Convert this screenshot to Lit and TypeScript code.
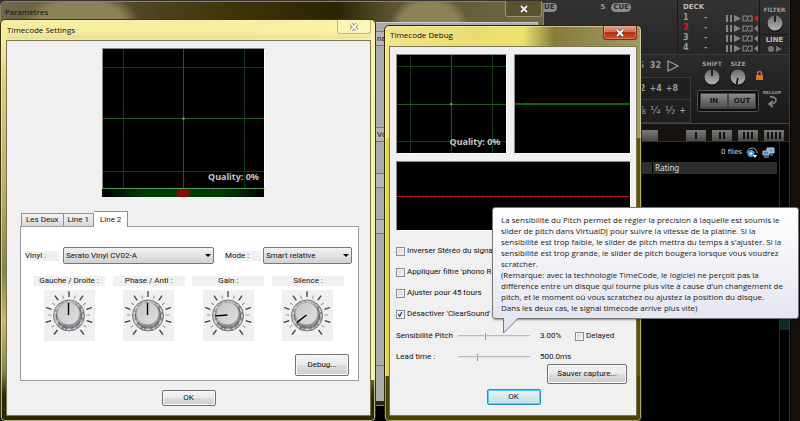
import { LitElement, html, css, svg } from "lit";
import { customElement, property } from "lit/decorators.js";

@customElement("signal-scope")
class SignalScope extends LitElement {
  @property({ type: Array }) columns: number[] = [];
  @property({ type: Array }) rows: number[] = [];
  @property() trace = "";
  @property() quality = "";

  static styles = css`
    :host { display: block; position: relative; background: #000; border: 1px solid #8c8c8c; border-right-color: #fff; border-bottom-color: #fff; box-sizing: border-box; }
    svg { display: block; width: 100%; height: 100%; }
    .quality { position: absolute; right: 5px; bottom: 5px; font: bold 9px/12px "Noto Sans", sans-serif; color: #c4c4c4; }
    .grid { stroke: #123a14; stroke-width: 1; }
    .axis { stroke: #1c5c20; stroke-width: 1; }
    .dot { fill: #2fe03a; }
    .green { stroke: #006c06; stroke-width: 2; }
    .red { stroke: #e01414; stroke-width: 1; stroke-dasharray: 3 1; }
    .under { stroke: #700808; stroke-width: 1; }
  `;

  render() {
    const mid = this.columns.length ? this.columns[1] : 0;
    const midRow = this.rows.length ? this.rows[1] : 0;
    return html`
      <svg aria-hidden="true">
        ${this.columns.map((x) => svg`<line class=${x === mid ? "axis" : "grid"} x1="${x}%" x2="${x}%" y1="0" y2="100%" shape-rendering="crispEdges"/>`)}
        ${this.rows.map((y) => svg`<line class=${y === midRow ? "axis" : "grid"} x1="0" x2="100%" y1="${y}%" y2="${y}%" shape-rendering="crispEdges"/>`)}
        ${mid ? svg`<svg x="${mid}%" y="${midRow}%" overflow="visible"><rect class="dot" x="-1" y="-1" width="2" height="2"/></svg>` : ""}
        ${this.trace === "green" ? svg`<line class="green" x1="0" x2="100%" y1="50%" y2="50%" shape-rendering="crispEdges"/>` : ""}
        ${this.trace === "red" ? svg`<line class="under" x1="0" x2="100%" y1="50%" y2="50%" shape-rendering="crispEdges"/><line class="red" x1="0" x2="100%" y1="50%" y2="50%" shape-rendering="crispEdges"/>` : ""}
      </svg>
      ${this.quality ? html`<span class="quality">${this.quality}</span>` : ""}
    `;
  }
}

@customElement("dial-knob")
class DialKnob extends LitElement {
  @property() label = "";
  @property({ type: Number }) angle = 0;

  static styles = css`
    :host { display: block; width: 72px; }
    .knob { display: flex; flex-direction: column; align-items: center; gap: 4px; position: relative; }
    .name { width: 100%; background: #f0f0f0; text-align: center; font: 8px/10px "Roboto", sans-serif; color: #111; }
    svg { display: block; width: 51px; height: 51px; background: #f0f0f0; }
    input { position: absolute; inset: 0; width: 100%; height: 100%; margin: 0; opacity: 0; }
  `;

  render() {
    const ticks = Array.from({ length: 17 }, (_, i) => i - 8);
    return html`
      <label class="knob">
        <span class="name">${this.label}</span>
        <svg viewBox="0 0 51 51" aria-hidden="true">
          <defs>
            <linearGradient id="rim" x1="0" y1="0" x2="1" y2="1">
              <stop offset="0" stop-color="#858588"/><stop offset="0.35" stop-color="#c2c2c5"/>
              <stop offset="0.6" stop-color="#808085"/><stop offset="1" stop-color="#aeaeb2"/>
            </linearGradient>
            <linearGradient id="cap" x1="0" y1="0" x2="1" y2="1">
              <stop offset="0" stop-color="#c6c6c9"/><stop offset="1" stop-color="#e0e0e3"/>
            </linearGradient>
          </defs>
          ${ticks.map((i) => {
            const major = i % 2 === 0;
            return svg`<line x1="25" x2="25" y1=${major ? 1.2 : 4.5} y2=${major ? 7 : 8}
              stroke=${major ? "#3a3a3a" : "#a8a8a8"} stroke-width="1.3" transform="rotate(${i * 17.7} 25 25.5)"/>`;
          })}
          <circle cx="25" cy="25.5" r="15.5" fill="url(#rim)" stroke="#77777b"/>
          <circle cx="25" cy="25.5" r="14" fill="none" stroke="#d4d4d8" stroke-width="1.6" stroke-dasharray="2 3 4 2 1 3"/>
          <circle cx="25" cy="25.5" r="12.5" fill="none" stroke="#68686d" stroke-width="1.2" stroke-dasharray="4 2 7 1"/>
          <circle cx="24.5" cy="23.5" r="11.3" fill="url(#cap)" stroke="#97979b" stroke-width="0.6"/>
          <line x1="24.5" y1="25" x2="24.5" y2="13" stroke="#000" stroke-width="1.4" transform="rotate(${this.angle} 24.5 25)"/>
        </svg>
        <input type="range" min="-142" max="142" .value=${String(this.angle)} />
      </label>
    `;
  }
}

@customElement("app-root")
class AppRoot extends LitElement {
  static styles = css`
    :host { display: block; position: relative; min-height: 100vh; overflow: hidden; background: #000; font: 8px/12px "Roboto", "Noto Sans", sans-serif; color: #111; }
    * { box-sizing: border-box; }
    button, select, input { font: inherit; color: inherit; margin: 0; }

    /* mixer behind the dialogs */
    .mixer { display: flex; flex-direction: column; min-height: 100vh; margin-right: 10px; background: #17140f; border-right: 1px solid #3a3a38; color: #9a9a9a; font: bold 7px/10px "DejaVu Sans", sans-serif; }
    .edge { position: absolute; inset: 0 0 0 auto; width: 9px; background: #15100c; }
    .upper { display: flex; justify-content: flex-end; height: 55px; background: linear-gradient(#333, #262626); border-bottom: 1px solid #3b3b3b; }
    .cues { display: flex; align-items: flex-start; gap: 6px; padding: 3px 46px 0 0; }
    .cue { padding: 0 2px; border-radius: 5px; background: #8c8c8c; color: #2b2b2b; line-height: 9px; }
    .cues > span { line-height: 9px; }
    .cues .first { margin-right: 38px; }
    .decks { width: 82px; padding: 2px 2px 0 5px; border-left: 1px solid #1a1a1a; }
    .decks h2 { margin: 0; font: inherit; line-height: 11px; color: #bbb; }
    .deck { display: grid; grid-template-columns: 16px 27px 8px 8px 12px 1fr; align-items: center; height: 10px; font-size: 8px; }
    .deck span { padding-left: 5px; }
    .deck.on b { color: #f21212; }
    .deck svg { display: block; }
    .line { width: 30px; border-left: 1px solid #191919; display: flex; flex-direction: column; align-items: center; padding-top: 6px; font-size: 6px; }
    .line .name { line-height: 8px; }
    .line .lower { width: 100%; margin-top: 2px; border-top: 1px solid #191919; color: #bbb; font-size: 7px; display: flex; flex-direction: column; align-items: center; }
    .loops { display: flex; justify-content: flex-end; height: 69px; background: linear-gradient(#2b2b2b, #191919); border-bottom: 1px solid #454545; }
    .beats { width: 68px; display: flex; flex-direction: column; font: bold 8px/12px "DejaVu Sans", sans-serif; }
    .beats div { flex: 1; display: flex; align-items: center; justify-content: flex-end; gap: 4px; padding-right: 12px; border-right: 1px solid #3b3b3b; border-bottom: 1px solid #3b3b3b; background: #202020; }
    .beats div:first-child { gap: 6px; border-right: 0; background: none; }
    .beats .parts { gap: 4px; padding-right: 4px; }
    .beats .parts span { font-size: 11px; font-weight: normal; }
    .loop { width: 98px; padding: 3px 4px 0 6px; display: grid; grid-template-columns: 62px 1fr; align-content: start; row-gap: 4px; }
    .dials { grid-column: 1 / 3; display: flex; padding: 2px 0 0 2px; align-items: center; font-size: 6px; }
    .dial { width: 26px; display: flex; flex-direction: column; align-items: center; line-height: 8px; }
    .lock { margin: 6px 0 0 4px; }
    .inout { display: flex; width: 62px; height: 22px; padding: 2px; border: 1px solid #555; border-radius: 3px; background: #0c0c0c; }
    .inout button { flex: 1; padding: 0; border: 1px solid #444; background: linear-gradient(#8c8c8c, #4c4c4c); color: #161616; font-size: 7px; }
    .reloop { display: flex; flex-direction: column; align-items: center; font-size: 4px; line-height: 5px; }
    .banks { display: flex; justify-content: flex-end; align-items: flex-end; gap: 6px; height: 17px; padding-right: 5px; }
    .bank { display: flex; justify-content: center; gap: 2px; width: 20px; height: 11px; padding: 2px 0; border: 0; background: linear-gradient(#7a7a7a, #4a4a4a); }
    .bank.wide { width: 26px; margin-right: 22px; }
    .bank i { width: 2px; background: #111; }
    .browser { flex: 1; display: grid; grid-template-columns: 1fr 10px; background: #000; border-top: 1px solid #303030; color: #ddd; }
    .rail { border-left: 1px solid #2c2c2c; padding-top: 177px; }
    .rail i { display: block; height: 11px; background: #0e2b2c; }
    .status { display: flex; justify-content: flex-end; align-items: center; gap: 4px; height: 20px; padding-right: 4px; font: 7px/12px "DejaVu Sans", sans-serif; }
    .cols { display: flex; justify-content: flex-end; gap: 1px; padding-right: 2px; }
    .cols span { width: 124px; height: 12px; padding-left: 2px; background: #2e2e2e; font: 8px/12px "Noto Sans", sans-serif; }

    /* glass windows */
    .window { position: absolute; border-radius: 5px; border: 1px solid #4a4526; }
    .bar { display: flex; justify-content: space-between; align-items: flex-start; }
    .bar h1 { margin: 0; font: 8px/12px "Open Sans", sans-serif; color: #0b0b0b; }
    .close { display: flex; align-items: center; justify-content: center; padding: 0; height: 14px; width: 34px; border: 1px solid #7d7750; border-top: 0; border-radius: 0 0 3px 3px; background: #fff3; }
    .close svg { display: block; }

    .params { left: 0; top: 1px; width: 68%; border-color: #8a8462; background: radial-gradient(ellipse 60px 34px at 80px 22px, #8a8258 70%, #0000 100%), radial-gradient(ellipse 40px 34px at 428px 26px, #8b8355 75%, #0000 100%), linear-gradient(90deg, #6f6a4c, #4d4420 28%, #3e3609 42%, #2b2404 62%, #5c5430 72%, #6f6944); }
    .params .bar { height: 20px; padding: 4px 1px 0 4px; }
    .params .close { background: #5a532f; margin-top: -5px; height: 16px; width: 37px; border-color: #9b9570; }
    .under { margin: 0 5px; padding-top: 8px; background: #aaa; border: 1px solid #ccc; border-bottom: 4px solid #2c2602; }
    .under p { margin: 0; height: 15px; padding-left: 370px; border: solid #777; border-width: 1px 0; background: #b6b6b6; line-height: 13px; overflow: hidden; }
    .under .group { margin-top: 81px; }
    .under .row { margin-top: 31px; }
    .under .last { margin: 131px 0 0; height: 36px; background: none; border-bottom: 0; }

    .settings { left: 0; top: 19px; width: 47%; padding: 0 4px 5px 5px; border: 1px solid #3a360f; background: linear-gradient(90deg, #0000 60%, #faf4a8 100%) 0 0 / 100% 360px no-repeat, linear-gradient(#f5eda0 20px, #dcd07c 60px, #b5aa62 180px, #8a814a 250px, #c4b86e 300px, #8f864d 350px, #2d2803 375px); box-shadow: inset 0 0 0 1px #f8f3b8aa; }
    .settings .bar { height: 20px; padding: 4px 0 0 1px; background: linear-gradient(#0000 12px, #cfc68955 18px, #0000); }
    .settings .close { margin-top: -4px; border-color: #c2ba7f; }
    .client { background: #f0f0f0; border: 1px solid #77754f; }
    .settings .client { display: flex; flex-direction: column; align-items: center; padding: 7px 11px 9px 13px; }
    .view { margin-right: 12px; }
    .settings signal-scope { width: 163px; height: 141px; border-bottom-color: #5c9660; }
    .balance { width: 162px; height: 8px; background: radial-gradient(ellipse 9px 16px, #8c0a00 30%, #0000 100%), linear-gradient(90deg, #000, #003a00 25%, #003a00 75%, #000); }
    .tabs { align-self: stretch; display: flex; align-items: flex-end; margin-top: 14px; padding-left: 1px; position: relative; }
    .tab { height: 13px; padding: 0 4px; border: 1px solid #8e8f94; border-bottom: 0; background: linear-gradient(#f4f4f4, #d8d8d8); line-height: 12px; white-space: nowrap; }
    .tab + .tab { border-left: 0; }
    .tab.on { height: 16px; margin-bottom: -1px; padding: 0 6px; background: #fff; }
    .page { align-self: stretch; padding: 20px 6px 4px 4px; border: 1px solid #9a9ba5; background: #fff; }
    .fields { display: flex; align-items: center; gap: 4px; height: 17px; }
    .fields label { width: 34px; background: #f0f0f0; line-height: 10px; }
    .fields .mode { margin-left: 7px; width: 36px; }
    select { appearance: none; height: 17px; padding: 0 2px; border: 1px solid #777; border-radius: 2px; background: linear-gradient(#f2f2f2, #d2d2d2); }
    .pick { position: relative; display: flex; flex: 151; }
    .pick.small { flex: 89; margin-left: -2px; }
    .pick select { width: 100%; }
    .pick svg { position: absolute; right: 3px; top: 7px; pointer-events: none; }
    .knobs { display: flex; justify-content: space-between; margin-top: 12px; padding: 0 8px; }
    .actions { display: flex; justify-content: flex-end; margin-top: 13px; padding-right: 3px; }
    .push { padding: 0; border: 1px solid #707070; border-radius: 2px; background: linear-gradient(#f3f3f3, #ebebeb 50%, #dcdcdc 50%, #cfcfcf); box-shadow: inset 0 0 0 1px #fafafa; }
    .debug { width: 54px; height: 22px; }
    .ok { width: 54px; height: 16px; }
    .settings .ok { margin: 9px 2px 0 0; }

    .monitor { left: 48%; top: 25px; width: 32.25%; padding: 0 4px 5px; border-color: #2b270c; background: linear-gradient(90deg, #f3e58a, #eadc72 35%, #efe16e 54%, #877c3c 66%, #a09a66) 0 0 / 100% 112px no-repeat, linear-gradient(90deg, #e5d148 50%, #5d5208 50%) 0 0 / 100% 350px no-repeat, linear-gradient(#5a5010, #4b4206); box-shadow: inset 0 0 0 1px #fbf5c088; }
    .monitor .bar { height: 20px; padding: 3px 0 0 1px; }
    .monitor .close { margin-top: -3px; border-color: #7b2a1c; background: linear-gradient(#e0a08c, #cf6f54 45%, #b52f12 50%, #d4502e); box-shadow: inset 0 0 0 1px #f0b8a066; }
    .monitor .client { padding: 7px 5px 10px 6px; }
    .scopes { display: grid; grid-template-columns: 111fr 118fr; gap: 7px; }
    .scopes signal-scope { height: 100px; }
    .scopes .wide { grid-column: 1 / 3; height: 70px; }
    .checks { margin-top: 14px; display: grid; grid-auto-rows: 12px; row-gap: 9px; }
    .check { display: flex; align-items: center; gap: 2px; white-space: nowrap; }
    .check input { appearance: none; flex: none; width: 9px; height: 9px; border: 1px solid #8b8b8b; background: linear-gradient(135deg, #cfd2d6, #f6f6f6); box-shadow: inset 0 0 0 1px #f4f4f4; }
    .check input:checked { background: url("data:image/svg+xml,%3Csvg xmlns='http://www.w3.org/2000/svg' viewBox='0 0 9 9'%3E%3Cpath d='M1.5 4 3.5 6.5 6.5 .5' fill='none' stroke='%23233f8c' stroke-width='1.5'/%3E%3C/svg%3E") #e8eaee; }
    .sliders { display: grid; grid-template-columns: 62px 72px 45px 1fr; row-gap: 9px; margin-top: 10px; align-items: center; white-space: nowrap; }
    .sliders output { padding-left: 10px; }
    input[type="range"] { appearance: none; width: 100%; height: 7px; background: linear-gradient(#bbb, #bbb) 0 2px / 100% 1px no-repeat, linear-gradient(#e2e2e2, #e2e2e2) 0 3px / 100% 1px no-repeat; }
    input[type="range"]::-webkit-slider-thumb { appearance: none; width: 2px; height: 7px; background: #f0f0f0; border-right: 1px solid #999; }
    .capture { width: 80px; height: 20px; }
    .foot { display: flex; flex-direction: column; align-items: center; gap: 5px; padding-top: 1px; }
    .foot .capture { align-self: flex-end; margin-right: 4px; }
    .foot .ok { border-color: #2a8fb5; background: linear-gradient(#eef6fa, #d6e8f1 50%, #bfdceb); box-shadow: inset 0 0 0 1px #4fd0f4; }

    .tip { position: absolute; left: 61%; right: 1px; top: 207px; margin-left: 4px; padding: 6px 8px 5px; border: 1px solid #767676; border-radius: 3px; background: linear-gradient(#fff, #e4e5f0); box-shadow: 1px 1px 2px #0006; font: 8px/11px "Open Sans", sans-serif; color: #202020; }
    .tip p { margin: 0; white-space: pre; }
    .tip svg { position: absolute; left: 10px; top: 100%; }
  `;

  private cross(color: string) {
    return html`<svg width="10" height="8" viewBox="0 0 10 8" aria-hidden="true"><path d="M2 1 8 7M8 1 2 7" stroke="#444a" stroke-width="3.4"/><path d="M2 1 8 7M8 1 2 7" stroke=${color} stroke-width="1.8"/></svg>`;
  }

  private arrow() {
    return html`<svg width="6" height="3" viewBox="0 0 6 3" aria-hidden="true"><path d="M0 0H6L3 3Z" fill="#000"/></svg>`;
  }

  private dial(angle: number) {
    return html`<svg width="18" height="18" viewBox="0 0 18 18" aria-hidden="true">
      <defs><linearGradient id="g" x2="0" y2="1"><stop stop-color="#6a6a6a"/><stop offset="1" stop-color="#b4b4b4"/></linearGradient></defs>
      <circle cx="9" cy="10" r="8" fill="#111"/><circle cx="9" cy="9" r="7.5" fill="url(#g)"/>
      <path d="M9 8V1.5" stroke="#0a0a0a" stroke-width="1.6" transform="rotate(${angle} 9 9)"/></svg>`;
  }

  private deck(n: number) {
    return html`<div class="deck ${n === 2 ? "on" : ""}">
      <b>${n}</b><span>-</span>
      <svg width="7" height="7" viewBox="0 0 7 7"><path d="M1 0V7M5 0V7" stroke="#858585" stroke-width="2"/></svg>
      <svg width="7" height="7" viewBox="0 0 7 7"><path d="M0 0 7 3.5 0 7Z" fill="#858585"/></svg>
      <svg width="11" height="7" viewBox="0 0 11 7"><path d="M4.5 2V1H1V6H4.5L6.5 1H10V6H6.5V5" fill="none" stroke="#858585" stroke-width="1.2"/></svg>
      <svg width="4" height="7" viewBox="0 0 4 7"><path d="M4 0V7L0 3.5Z" fill=${n === 1 ? "#f21212" : "#858585"}/></svg>
    </div>`;
  }

  render() {
    return html`
      <div class="edge"></div>
      <main class="mixer">
        <section class="upper">
          <div class="cues"><span class="cue first">CUE</span><span>5</span><span class="cue">CUE</span></div>
          <div class="decks"><h2>DECK</h2>${[1, 2, 3, 4].map((n) => this.deck(n))}</div>
          <div class="line">
            <span class="name">FILTER</span>${this.dial(0)}
            <div class="lower">LINE
              <svg width="16" height="8" viewBox="0 0 16 8" aria-hidden="true"><circle cx="4" cy="4" r="3" fill="#777"/><path d="M9 1 15 4 9 7Z" fill="#777"/></svg>
            </div>
          </div>
        </section>
        <section class="loops">
          <div class="beats">
            <div><span>16</span><span>32</span><svg width="12" height="12" viewBox="0 0 12 12" aria-hidden="true"><path d="M1 1 11 6 1 11Z" fill="none" stroke="#999" stroke-width="1.3"/></svg></div>
            <div><span>2</span><span>+4</span><span>+8</span></div>
            <div class="parts"><span>⅛</span><span>¼</span><span>½</span><b>+</b></div>
          </div>
          <div class="loop">
            <div class="dials">
              <span class="dial">SHIFT${this.dial(0)}</span><span class="dial">SIZE${this.dial(190)}</span>
              <svg class="lock" width="9" height="10" viewBox="0 0 9 10" aria-hidden="true"><path d="M2.5 5V2.5a2 2 0 0 1 4 0V5" fill="none" stroke="#d9781c" stroke-width="1.3"/><path d="M1 4H8V9H1Z" fill="#d9781c"/></svg>
            </div>
            <div class="inout"><button>IN</button><button>OUT</button></div>
            <div class="reloop">RELOOP
              <svg width="12" height="14" viewBox="0 0 12 14" aria-hidden="true"><path d="M4 2C12 1 12 9 4 9M7 6 3 9 7 12" fill="none" stroke="#858585" stroke-width="1.6"/></svg>
            </div>
          </div>
        </section>
        <div class="banks">
          <button class="bank wide" aria-label="0"></button>
          ${[1, 2, 3, 4].map((n) => html`<button class="bank" aria-label=${n}>${Array.from({ length: n }, () => html`<i></i>`)}</button>`)}
        </div>
        <section class="browser">
          <div>
            <div class="status"><span>0 files</span>
              <svg width="12" height="11" viewBox="0 0 12 11" aria-hidden="true"><path d="M1 6a5 5 0 0 1 10 0" fill="none" stroke="#aaa"/><circle cx="5" cy="6.5" r="3.5" fill="#4f9fe0"/><circle cx="5" cy="6.5" r="1.2" fill="#eaf4ff"/><path d="M7 8H11L9 11Z" fill="#fff"/></svg>
              <svg width="13" height="11" viewBox="0 0 13 11" aria-hidden="true"><path d="M5 1H12V6H5Z" fill="#5db0f0" stroke="#ccc"/><path d="M1 4H7V8H1Z" fill="#3d8ad0" stroke="#ccc"/><path d="M2 10H7M8 8H11" stroke="#bbb"/></svg>
            </div>
            <div class="cols"><span></span><span>Rating</span></div>
          </div>
          <div class="rail"><i></i></div>
        </section>
      </main>

      <section class="window params">
        <header class="bar"><h1>Paramètres</h1><button class="close" aria-label="Fermer">${this.cross("#eee")}</button></header>
        <div class="under"><p>nal</p><p class="group">Volume</p><p class="row"></p><p class="row"></p><p class="last"></p></div>
      </section>

      <section class="window settings">
        <header class="bar"><h1>Timecode Settings</h1><button class="close" aria-label="Fermer">${this.cross("#fff")}</button></header>
        <div class="client">
          <div class="view">
            <signal-scope .columns=${[12.5, 50, 88]} .rows=${[13, 50, 88]} quality="Quality: 0%"></signal-scope>
            <div class="balance"></div>
          </div>
          <nav class="tabs" role="tablist">
            <button class="tab" role="tab">Les Deux</button><button class="tab" role="tab">Line 1</button><button class="tab on" role="tab" aria-selected="true">Line 2</button>
          </nav>
          <div class="page">
            <div class="fields">
              <label for="vinyl">Vinyl :</label>
              <span class="pick"><select id="vinyl"><option>Serato Vinyl CV02-A</option></select>${this.arrow()}</span>
              <label class="mode" for="mode">Mode :</label>
              <span class="pick small"><select id="mode"><option>Smart relative</option></select>${this.arrow()}</span>
            </div>
            <div class="knobs">
              <dial-knob label="Gauche / Droite :" .angle=${0}></dial-knob>
              <dial-knob label="Phase / Anti :" .angle=${0}></dial-knob>
              <dial-knob label="Gain :" .angle=${-94}></dial-knob>
              <dial-knob label="Silence :" .angle=${-128}></dial-knob>
            </div>
            <div class="actions"><button class="push debug">Debug...</button></div>
          </div>
          <button class="push ok">OK</button>
        </div>
      </section>

      <section class="window monitor">
        <header class="bar"><h1>Timecode Debug</h1><button class="close" aria-label="Fermer">${this.cross("#fff")}</button></header>
        <div class="client">
          <div class="scopes">
            <signal-scope .columns=${[12.5, 50, 88]} .rows=${[12, 50, 88]} quality="Quality: 0%"></signal-scope>
            <signal-scope trace="green"></signal-scope>
            <signal-scope class="wide" trace="red"></signal-scope>
          </div>
          <div class="checks">
            <label class="check"><input type="checkbox" />Inverser Stéréo du signa</label>
            <label class="check"><input type="checkbox" />Appliquer filtre 'phono R.</label>
            <label class="check"><input type="checkbox" />Ajuster pour 45 tours</label>
            <label class="check"><input type="checkbox" checked />Désactiver 'ClearSound'</label>
          </div>
          <div class="sliders">
            <label for="pitch">Sensibilité Pitch</label><input id="pitch" type="range" value="37" /><output for="pitch">3.00%</output>
            <label class="check"><input type="checkbox" />Delayed</label>
            <label for="lead">Lead time :</label><input id="lead" type="range" value="25" /><output for="lead">500.0ms</output>
          </div>
          <div class="foot"><button class="push capture">Sauver capture...</button><button class="push ok">OK</button></div>
        </div>
      </section>

      <aside class="tip" role="tooltip"><p>La sensibilité du Pitch permet de régler la précision à laquelle est soumis le
slider de pitch dans VirtualDJ pour suivre la vitesse de la platine. Si la
sensibilité est trop faible, le slider de pitch mettra du temps à s'ajuster. Si la
sensibilité est trop grande, le slider de pitch bougera lorsque vous voudrez
scratcher.
(Remarque: avec la technologie TimeCode, le logiciel ne perçoit pas la
différence entre un disque qui tourne plus vite à cause d'un changement de
pitch, et le moment où vous scratchez ou ajustez la position du disque.
Dans les deux cas, le signal timecode arrive plus vite)</p>
        <svg width="16" height="16" viewBox="0 0 16 16" aria-hidden="true"><path d="M.5 0V15L15 0Z" fill="#e4e5f0"/><path d="M.5 0V15L15 .5" fill="none" stroke="#767676"/></svg>
      </aside>
    `;
  }
}
